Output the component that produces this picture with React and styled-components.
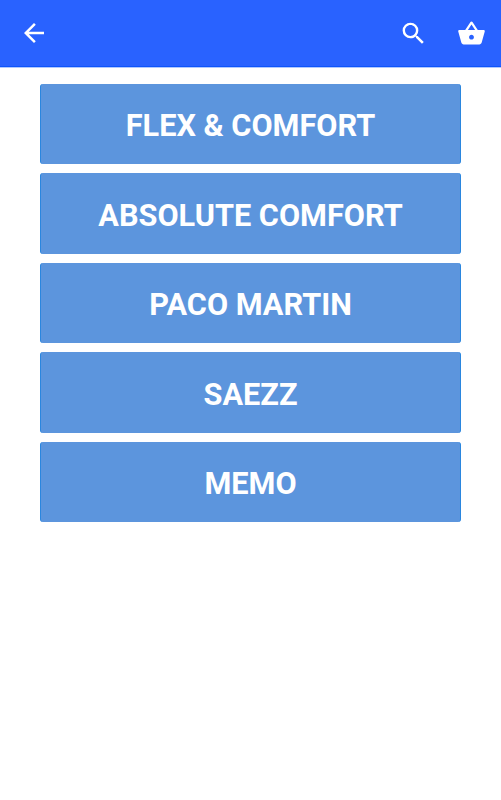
import React from 'react'
import styled, { createGlobalStyle } from 'styled-components'
import { MdArrowBack, MdSearch, MdShoppingBasket } from 'react-icons/md'

const brands = [
  'FLEX & COMFORT',
  'ABSOLUTE COMFORT',
  'PACO MARTIN',
  'SAEZZ',
  'MEMO',
]

const App = () => {
  return (
    <>
      <GlobalStyle />
      <Header>
        <IconButton aria-label='Back' $size={30}>
          <MdArrowBack />
        </IconButton>
        <Actions>
          <IconButton aria-label='Search' $size={29}>
            <MdSearch />
          </IconButton>
          <IconButton aria-label='Basket' $size={29}>
            <MdShoppingBasket />
          </IconButton>
        </Actions>
      </Header>
      <BrandList>
        {brands.map((brand) => (
          <BrandButton key={brand}>{brand}</BrandButton>
        ))}
      </BrandList>
    </>
  )
}

const GlobalStyle = createGlobalStyle`
  * {
    box-sizing: border-box;
  }
  body {
    margin: 0;
    background: #fff;
    font-family: Roboto, sans-serif;
  }
`
const Header = styled.header`
  display: flex;
  align-items: center;
  justify-content: space-between;
  height: 68px;
  padding: 0 15px 1px 19px;
  border-bottom: 1px solid #b0c8ff;
  background: #2962ff;
  box-shadow: inset 0 -1px #0d55fb;
`
const Actions = styled.div`
  display: flex;
  gap: 29px;
`
const IconButton = styled.button`
  display: flex;
  padding: 0;
  border: none;
  background: none;
  color: #fff;
  font-size: ${({ $size }) => $size}px;
  cursor: pointer;
`
const BrandList = styled.main`
  display: flex;
  flex-direction: column;
  gap: 9px;
  padding: 16px 40px;
`
const BrandButton = styled.button`
  height: 80.4px;
  padding: 4.5px 0 0;
  border: solid #2a86df;
  border-width: 0 1px;
  border-radius: 3px;
  background: #5c95dd;
  color: #fff;
  font-family: inherit;
  font-size: 30.7px;
  font-weight: 700;
  line-height: 36px;
  cursor: pointer;
`
export default App
